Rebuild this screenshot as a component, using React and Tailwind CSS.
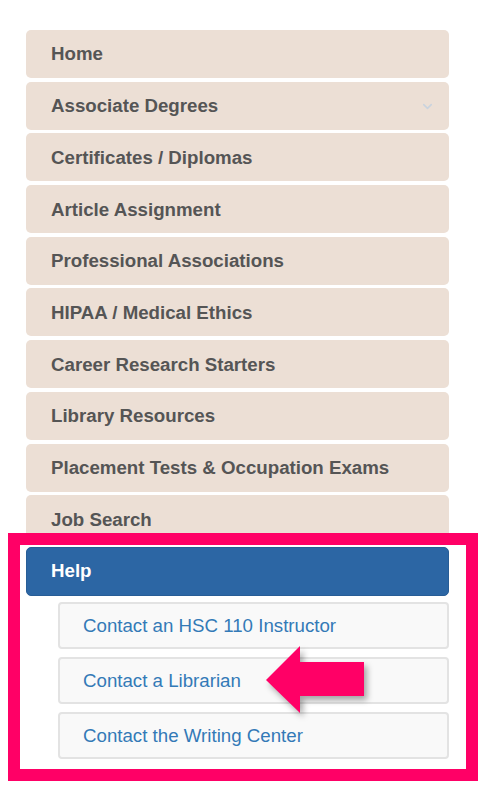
import { ChevronDown } from 'lucide-react';

const items = [
  'Home',
  'Associate Degrees',
  'Certificates / Diplomas',
  'Article Assignment',
  'Professional Associations',
  'HIPAA / Medical Ethics',
  'Career Research Starters',
  'Library Resources',
  'Placement Tests & Occupation Exams',
  'Job Search',
];

const helpLinks = ['Contact an HSC 110 Instructor', 'Contact a Librarian', 'Contact the Writing Center'];

export default function App() {
  return (
    <div className="min-h-screen bg-white pt-[30px] font-['Liberation_Sans',Arial,sans-serif]">
      <div className="flex flex-col gap-[3.7px] pl-[26px] pr-[35px]">
        {items.map((label, i) => (
          <div
            key={label}
            className="h-[48px] rounded-[5px] bg-[#ecdfd5] flex items-center justify-between pl-[25px] pr-[14px] pt-[1px] text-[18.7px] font-bold text-[#555555]"
          >
            <span>{label}</span>
            {i === 1 && <ChevronDown size={15} strokeWidth={2.5} className="text-[#c9d3de]" />}
          </div>
        ))}
      </div>

      <div className="relative z-10 mt-[-10.3px] ml-[8px] w-[470px] border-[12px] border-[#ff0066] bg-white pt-[2px] pb-[10px] pl-[6px] pr-[17px]">
        <div className="h-[49px] rounded-[5px] bg-[#2c66a4] border border-[#285d96] flex items-center pl-[24px] text-[18.7px] font-bold text-white">
          Help
        </div>
        <div className="mt-[6px] ml-[32px] flex flex-col gap-[8px]">
          {helpLinks.map((label) => (
            <div
              key={label}
              className="h-[47px] rounded-[4px] border-2 border-[#e3e3e3] bg-[#f9f9f9] flex items-center pl-[23px] pt-[2px] text-[18.7px] text-[#337ab7]"
            >
              {label}
            </div>
          ))}
        </div>

        <svg
          className="absolute left-[246px] top-[101px] drop-shadow-[3px_4px_3px_rgba(0,0,0,0.35)]"
          width="100"
          height="70"
          viewBox="0 0 100 70"
        >
          <polygon points="0,34 34,0 34,16 98,16 98,50 34,50 34,67" fill="#ff0066" />
        </svg>
      </div>
    </div>
  );
}
